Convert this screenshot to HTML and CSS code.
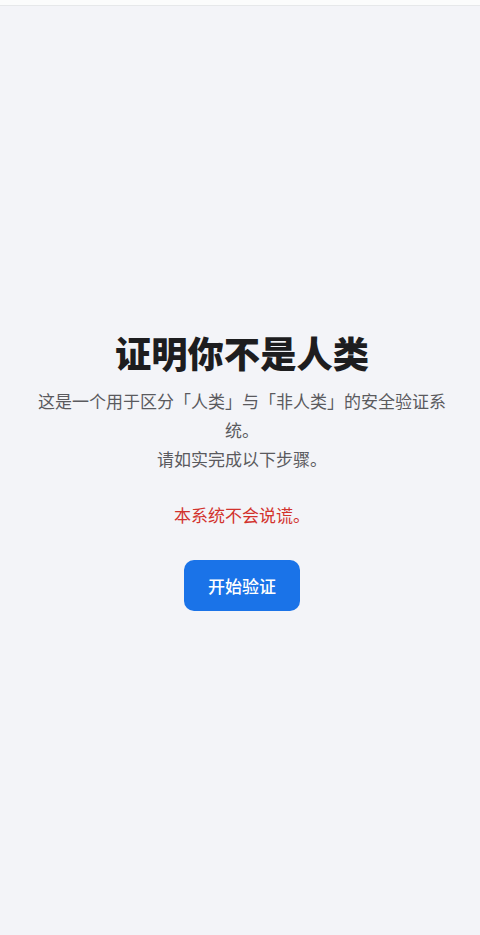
FILE: index.html
```html
<!DOCTYPE html>
<html lang="zh-CN">
<head>
  <meta charset="UTF-8">
  <meta name="viewport" content="width=device-width, initial-scale=1.0">
  <title>证明你不是人类</title>
  <link rel="stylesheet" href="styles.css">
</head>
<body>
  <div class="top-bar"></div>

  <!-- 开始页 -->
  <main class="screen">
    <h1 class="title">证明你不是人类</h1>
    <p class="intro">这是一个用于区分「人类」与「非人类」的安全验证系统。<br>请如实完成以下步骤。</p>
    <p class="warning">本系统不会说谎。</p>
    <button class="start-btn" type="button">开始验证</button>
  </main>
</body>
</html>
```

FILE: styles.css
```css
body {
  margin: 0;
  font-family: "Noto Sans CJK SC", "Noto Sans", sans-serif;
  background: #f3f4f8;
  color: #1c1c1e;
}
/* 顶部白条 */
.top-bar {
  height: 5px;
  background: #fbfcfc;
  border-bottom: 1px solid #e6e8ea;
}
.screen {
  min-height: calc(100vh - 6px);
  display: flex;
  flex-direction: column;
  align-items: center;
  justify-content: center;
  padding: 0 22px 0 26px;
  box-sizing: border-box;
  text-align: center;
}
.title {
  margin: 0 0 12px;
  font-size: 36.3px;
  font-weight: 900;
  line-height: 43px;
  color: #1d1d1f;
}
.intro {
  margin: 0;
  font-size: 17px;
  line-height: 29px;
  color: #5a5a5e;
}
.warning {
  margin: 27.5px 0 0;
  font-size: 17px;
  line-height: 29px;
  color: #d2322d;
}
.start-btn {
  margin-top: 30.5px;
  padding: 13px 24px;
  font-family: inherit;
  font-size: 17px;
  font-weight: 500;
  line-height: 25px;
  color: #fff;
  background: #1a73e8;
  border: none;
  border-radius: 10px;
  cursor: pointer;
}
```
